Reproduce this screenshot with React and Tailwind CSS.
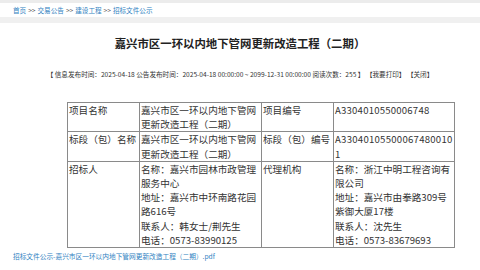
export default function App() {
  const font = { fontFamily: '"Noto Sans CJK SC", "Noto Sans", sans-serif' };

  return (
    <div className="w-[480px] h-[270px] bg-white overflow-hidden text-[#333]" style={font}>
      {/* breadcrumb bar */}
      <div className="border-t-[3px] border-[#ececec]">
        <div className="h-[14px] flex items-center px-[13px] text-[6.6px] leading-none">
          <span className="text-[#2f7fbf]">首页</span>
          <span className="text-[#555] mx-[2px]">&gt;&gt;</span>
          <span className="text-[#2f7fbf]">交易公告</span>
          <span className="text-[#555] mx-[2px]">&gt;&gt;</span>
          <span className="text-[#2f7fbf]">建设工程</span>
          <span className="text-[#555] mx-[2px]">&gt;&gt;</span>
          <span className="text-[#2f7fbf]">招标文件公示</span>
        </div>
        <div className="h-[6px] bg-[#f0f0f0]"></div>
      </div>

      {/* title */}
      <h1 className="mt-[12px] text-center font-bold text-[11.4px] leading-[16px] text-[#222]">
        嘉兴市区一环以内地下管网更新改造工程（二期）
      </h1>

      {/* meta */}
      <div className="mt-[18px] text-center text-[6.6px] leading-[10px] text-[#333]">
        【 信息发布时间：2025-04-18 公告发布时间：2025-04-18 00:00:00 ~ 2099-12-31 00:00:00 阅读次数：255 】 【我要打印】 【关闭】
      </div>

      {/* table */}
      <table className="mt-[23px] ml-[67px] w-[387px] table-fixed border-collapse text-[9.6px] leading-[14.2px] text-[#333] [word-break:break-all]">
        <colgroup>
          <col className="w-[72px]" />
          <col className="w-[122px]" />
          <col className="w-[72px]" />
          <col className="w-[121px]" />
        </colgroup>
        <tbody>
          <tr>
            <td className="border border-[#8a8a8a] align-top px-[1px] py-0">项目名称</td>
            <td className="border border-[#8a8a8a] align-top px-[1px] py-0">嘉兴市区一环以内地下管网更新改造工程（二期）</td>
            <td className="border border-[#8a8a8a] align-top px-[1px] py-0">项目编号</td>
            <td className="border border-[#8a8a8a] align-top px-[1px] py-0 tracking-[0.2px]">A3304010550006748</td>
          </tr>
          <tr>
            <td className="border border-[#8a8a8a] align-top px-[1px] py-0">标段（包）名称</td>
            <td className="border border-[#8a8a8a] align-top px-[1px] py-0">嘉兴市区一环以内地下管网更新改造工程（二期）</td>
            <td className="border border-[#8a8a8a] align-top px-[1px] py-0">标段（包）编号</td>
            <td className="border border-[#8a8a8a] align-top px-[1px] py-0 tracking-[0.25px]">A330401055000674800101</td>
          </tr>
          <tr>
            <td className="border border-[#8a8a8a] align-top px-[1px] py-0">招标人</td>
            <td className="border border-[#8a8a8a] align-top px-[1px] py-0">
              <p>名称：嘉兴市园林市政管理服务中心</p>
              <p>地址：嘉兴市中环南路花园路616号</p>
              <p>联系人：韩女士/荆先生</p>
              <p>电话：0573-83990125</p>
            </td>
            <td className="border border-[#8a8a8a] align-top px-[1px] py-0">代理机构</td>
            <td className="border border-[#8a8a8a] align-top px-[1px] py-0">
              <p>名称：浙江中明工程咨询有限公司</p>
              <p>地址：嘉兴市由拳路309号紫御大厦17楼</p>
              <p>联系人：沈先生</p>
              <p>电话：0573-83679693</p>
            </td>
          </tr>
        </tbody>
      </table>

      {/* attachment */}
      <div className="mt-[3px] px-[13px] text-[6.7px] leading-[10px]">
        <span className="text-[#2f7fbf]">招标文件公示-嘉兴市区一环以内地下管网更新改造工程（二期）.pdf</span>
      </div>
    </div>
  );
}
